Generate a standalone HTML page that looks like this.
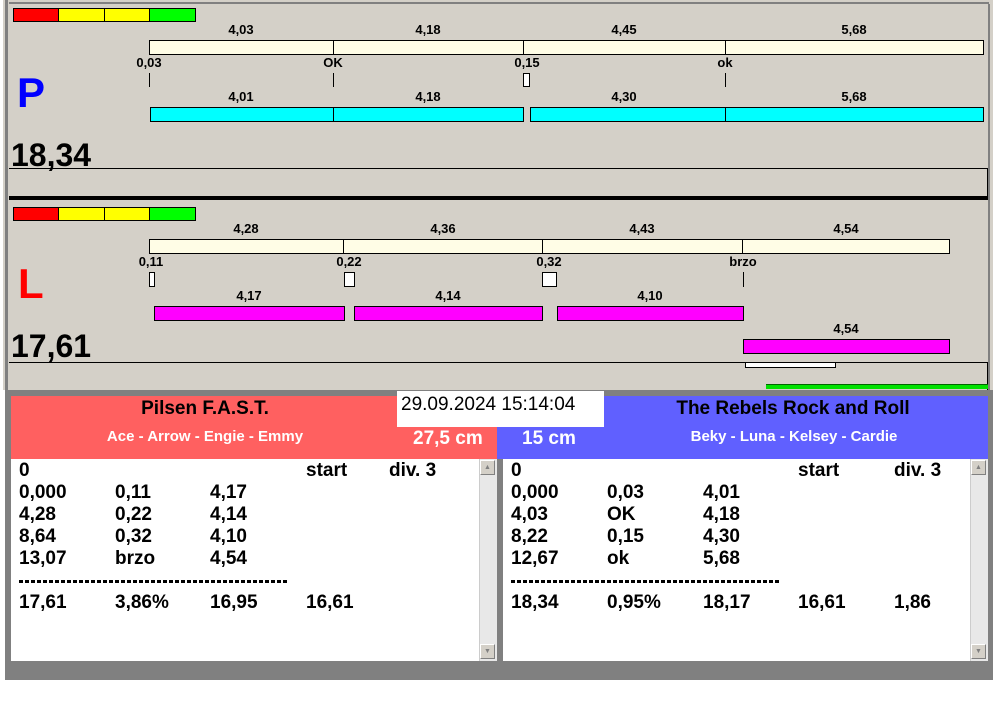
<!DOCTYPE html>
<html><head><meta charset="utf-8"><style>
*{margin:0;padding:0;box-sizing:border-box}
body{width:995px;height:716px;background:#fff;position:relative;overflow:hidden;font-family:"Liberation Sans",Arial,sans-serif}
div,span{position:absolute}
.g{background:#d4d0c8}
.t{font-weight:bold;font-size:13px;color:#000;transform:translateX(-50%);white-space:nowrap;line-height:14px}
.cr{background:#fffde6;border:1px solid #000}
.cy{background:#00ffff;border:1px solid #000}
.mg{background:#ff00ff;border:1px solid #000}
.vl{width:1px;background:#000}
.bx{background:#fff;border:1px solid #000}
.row{font-weight:bold;font-size:19px;line-height:22px;white-space:nowrap}
.sb{background:#e8e8e8;border-left:1px solid #ccc}
.sbb{width:15px;height:15px;background:#d4d0c8;border:1px solid #fff;border-right-color:#808080;border-bottom-color:#808080;font-size:7px;color:#808080;text-align:center;line-height:13px}
.dash{height:3px;background:repeating-linear-gradient(90deg,#000 0 4px,transparent 4px 6px)}
</style></head><body>
<div class="g" style="left:3px;top:0;width:990px;height:390px"></div>
<div style="left:5px;top:0;width:3px;height:680px;background:#808080"></div>
<div style="left:9px;top:2px;width:980px;height:2px;background:#808080"></div>
<div style="left:988px;top:4px;width:2px;height:386px;background:#808080"></div>

<div style="left:13px;top:8px;width:46px;height:14px;background:#f00;border:1px solid #000"></div>
<div style="left:58px;top:8px;width:47px;height:14px;background:#ff0;border:1px solid #000"></div>
<div style="left:104px;top:8px;width:46px;height:14px;background:#ff0;border:1px solid #000"></div>
<div style="left:149px;top:8px;width:47px;height:14px;background:#0f0;border:1px solid #000"></div>

<span class="t" style="left:241px;top:23px">4,03</span>
<span class="t" style="left:428px;top:23px">4,18</span>
<span class="t" style="left:624px;top:23px">4,45</span>
<span class="t" style="left:854px;top:23px">5,68</span>
<div class="cr" style="left:149px;top:40px;width:835px;height:15px"></div>
<div class="vl" style="left:333px;top:40px;height:15px"></div>
<div class="vl" style="left:523px;top:40px;height:15px"></div>
<div class="vl" style="left:725px;top:40px;height:15px"></div>
<span class="t" style="left:149px;top:56px">0,03</span>
<span class="t" style="left:333px;top:56px">OK</span>
<span class="t" style="left:527px;top:56px">0,15</span>
<span class="t" style="left:725px;top:56px">ok</span>
<div class="vl" style="left:149px;top:73px;height:14px"></div>
<div class="vl" style="left:333px;top:73px;height:14px"></div>
<div class="bx" style="left:523px;top:73px;width:7px;height:14px"></div>
<div class="vl" style="left:725px;top:73px;height:14px"></div>
<span class="t" style="left:241px;top:90px">4,01</span>
<span class="t" style="left:428px;top:90px">4,18</span>
<span class="t" style="left:624px;top:90px">4,30</span>
<span class="t" style="left:854px;top:90px">5,68</span>
<div class="cy" style="left:150px;top:107px;width:374px;height:15px"></div>
<div class="vl" style="left:333px;top:107px;height:15px"></div>
<div class="cy" style="left:530px;top:107px;width:454px;height:15px"></div>
<div class="vl" style="left:725px;top:107px;height:15px"></div>
<span style="left:17px;top:71px;font-size:42px;font-weight:bold;color:#0000ff;line-height:44px">P</span>
<span style="left:11px;top:137px;font-size:32px;font-weight:bold;line-height:36px">18,34</span>
<div style="left:9px;top:168px;width:979px;height:28px;border-top:1px solid #000;border-right:1px solid #000"></div>
<div style="left:9px;top:196px;width:979px;height:4px;background:#000"></div>

<div style="left:13px;top:207px;width:46px;height:14px;background:#f00;border:1px solid #000"></div>
<div style="left:58px;top:207px;width:47px;height:14px;background:#ff0;border:1px solid #000"></div>
<div style="left:104px;top:207px;width:46px;height:14px;background:#ff0;border:1px solid #000"></div>
<div style="left:149px;top:207px;width:47px;height:14px;background:#0f0;border:1px solid #000"></div>
<span class="t" style="left:246px;top:222px">4,28</span>
<span class="t" style="left:443px;top:222px">4,36</span>
<span class="t" style="left:642px;top:222px">4,43</span>
<span class="t" style="left:846px;top:222px">4,54</span>
<div class="cr" style="left:149px;top:239px;width:801px;height:15px"></div>
<div class="vl" style="left:343px;top:239px;height:15px"></div>
<div class="vl" style="left:542px;top:239px;height:15px"></div>
<div class="vl" style="left:742px;top:239px;height:15px"></div>
<span class="t" style="left:151px;top:255px">0,11</span>
<span class="t" style="left:349px;top:255px">0,22</span>
<span class="t" style="left:549px;top:255px">0,32</span>
<span class="t" style="left:743px;top:255px">brzo</span>
<div class="bx" style="left:149px;top:272px;width:6px;height:15px"></div>
<div class="bx" style="left:344px;top:272px;width:11px;height:15px"></div>
<div class="bx" style="left:542px;top:272px;width:15px;height:15px"></div>
<div class="vl" style="left:743px;top:272px;height:15px"></div>
<span class="t" style="left:249px;top:289px">4,17</span>
<span class="t" style="left:448px;top:289px">4,14</span>
<span class="t" style="left:650px;top:289px">4,10</span>
<div class="mg" style="left:154px;top:306px;width:191px;height:15px"></div>
<div class="mg" style="left:354px;top:306px;width:189px;height:15px"></div>
<div class="mg" style="left:557px;top:306px;width:187px;height:15px"></div>
<span class="t" style="left:846px;top:322px">4,54</span>
<div class="mg" style="left:743px;top:339px;width:207px;height:15px"></div>
<span style="left:18px;top:262px;font-size:42px;font-weight:bold;color:#ff0000;line-height:44px">L</span>
<span style="left:11px;top:328px;font-size:32px;font-weight:bold;line-height:36px">17,61</span>
<div style="left:9px;top:362px;width:979px;height:28px;border-top:1px solid #000;border-right:1px solid #000"></div>
<div class="bx" style="left:745px;top:362px;width:91px;height:6px"></div>
<div style="left:766px;top:384px;width:222px;height:5px;background:#00e000;border-top:1px solid #060"></div>

<div style="left:8px;top:390px;width:985px;height:290px;background:#808080"></div>
<div style="left:11px;top:396px;width:486px;height:63px;background:#ff6060"></div>
<div style="left:497px;top:396px;width:491px;height:63px;background:#6060ff"></div>
<span style="left:205px;top:397px;transform:translateX(-50%);font-size:19px;font-weight:bold;white-space:nowrap;line-height:24px">Pilsen F.A.S.T.</span>
<span style="left:205px;top:428px;transform:translateX(-50%);font-size:15px;font-weight:bold;color:#fff;white-space:nowrap;line-height:18px">Ace - Arrow - Engie - Emmy</span>
<span style="left:793px;top:397px;transform:translateX(-50%);font-size:19px;font-weight:bold;white-space:nowrap;line-height:24px">The Rebels Rock and Roll</span>
<span style="left:794px;top:428px;transform:translateX(-50%);font-size:15px;font-weight:bold;color:#fff;white-space:nowrap;line-height:18px">Beky - Luna - Kelsey - Cardie</span>
<div style="left:397px;top:391px;width:207px;height:36px;background:#fff"></div>
<span style="left:401px;top:393px;font-size:19px;white-space:nowrap;line-height:24px">29.09.2024 15:14:04</span>
<span style="left:413px;top:428px;font-size:19px;font-weight:bold;color:#fff;white-space:nowrap;line-height:22px">27,5 cm</span>
<span style="left:522px;top:428px;font-size:19px;font-weight:bold;color:#fff;white-space:nowrap;line-height:22px">15 cm</span>

<div style="left:11px;top:459px;width:486px;height:202px;background:#fff"></div>
<div class="sb" style="left:479px;top:459px;width:18px;height:202px"></div>
<div class="sbb" style="left:480px;top:460px">▲</div>
<div class="sbb" style="left:480px;top:644px">▼</div>
<div style="left:503px;top:459px;width:485px;height:202px;background:#fff"></div>
<div class="sb" style="left:970px;top:459px;width:18px;height:202px"></div>
<div class="sbb" style="left:971px;top:460px">▲</div>
<div class="sbb" style="left:971px;top:644px">▼</div>

<span class="row" style="left:19px;top:460px">0</span><span class="row" style="left:306px;top:460px">start</span><span class="row" style="left:389px;top:460px">div. 3</span>
<span class="row" style="left:19px;top:482px">0,000</span><span class="row" style="left:115px;top:482px">0,11</span><span class="row" style="left:210px;top:482px">4,17</span>
<span class="row" style="left:19px;top:504px">4,28</span><span class="row" style="left:115px;top:504px">0,22</span><span class="row" style="left:210px;top:504px">4,14</span>
<span class="row" style="left:19px;top:526px">8,64</span><span class="row" style="left:115px;top:526px">0,32</span><span class="row" style="left:210px;top:526px">4,10</span>
<span class="row" style="left:19px;top:548px">13,07</span><span class="row" style="left:115px;top:548px">brzo</span><span class="row" style="left:210px;top:548px">4,54</span>
<div class="dash" style="left:19px;top:580px;width:269px"></div>
<span class="row" style="left:19px;top:592px">17,61</span><span class="row" style="left:115px;top:592px">3,86%</span><span class="row" style="left:210px;top:592px">16,95</span><span class="row" style="left:306px;top:592px">16,61</span>
<span class="row" style="left:511px;top:460px">0</span><span class="row" style="left:798px;top:460px">start</span><span class="row" style="left:894px;top:460px">div. 3</span>
<span class="row" style="left:511px;top:482px">0,000</span><span class="row" style="left:607px;top:482px">0,03</span><span class="row" style="left:703px;top:482px">4,01</span>
<span class="row" style="left:511px;top:504px">4,03</span><span class="row" style="left:607px;top:504px">OK</span><span class="row" style="left:703px;top:504px">4,18</span>
<span class="row" style="left:511px;top:526px">8,22</span><span class="row" style="left:607px;top:526px">0,15</span><span class="row" style="left:703px;top:526px">4,30</span>
<span class="row" style="left:511px;top:548px">12,67</span><span class="row" style="left:607px;top:548px">ok</span><span class="row" style="left:703px;top:548px">5,68</span>
<div class="dash" style="left:511px;top:580px;width:269px"></div>
<span class="row" style="left:511px;top:592px">18,34</span><span class="row" style="left:607px;top:592px">0,95%</span><span class="row" style="left:703px;top:592px">18,17</span><span class="row" style="left:798px;top:592px">16,61</span><span class="row" style="left:894px;top:592px">1,86</span>
</body></html>
